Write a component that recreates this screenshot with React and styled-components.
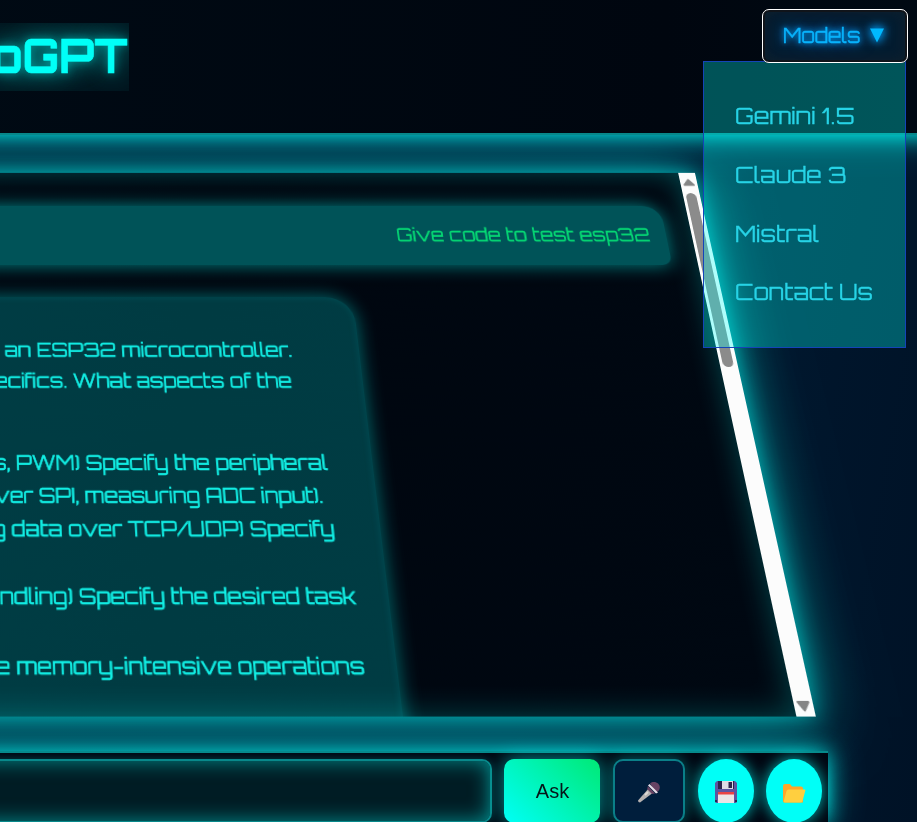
import React, { useLayoutEffect, useRef } from 'react';
import styled, { createGlobalStyle } from 'styled-components';

const techFont = '"Orbitron", "DejaVu Sans", sans-serif';

const GlobalStyle = createGlobalStyle`
  * { box-sizing: border-box; }
  html, body { margin: 0; padding: 0; overflow: hidden; background: #000a14; }
`;

const Page = styled.div`
  width: 917px;
  height: 822px;
  overflow: hidden;
  display: flex;
  flex-direction: column;
  background: linear-gradient(100deg, #00182f 0%, #001a33 60%, #001226 100%);
  font-family: ${techFont};
`;

const Header = styled.header`
  position: relative;
  z-index: 2;
  flex: 0 0 135px;
  display: flex;
  justify-content: space-between;
  align-items: flex-start;
  margin: 0 -60px;
  padding: 9px 69px 0 60px;
  background: linear-gradient(90deg, #000a14, #00060f 70%, #000a14);
  border-bottom: 2px solid #07878a;
  box-shadow: 0 0 20px rgba(0, 255, 247, 0.9), 0 0 40px rgba(0, 220, 235, 0.42);
`;

const Title = styled.h1`
  margin: 14px 0 0;
  width: 129px;
  height: 68px;
  padding-right: 1px;
  overflow: hidden;
  display: flex;
  justify-content: flex-end;
  font-size: 45.5px;
  line-height: 66px;
  font-weight: 700;
  color: #00fff7;
  background: rgba(0, 255, 255, 0.05);
  -webkit-text-stroke: 0.6px #00fff7;
  text-shadow: 0 0 10px rgba(0, 255, 247, 0.42), 0 0 22px rgba(0, 255, 247, 0.5), 0 0 36px rgba(0, 255, 247, 0.4);
`;

const FittedBox = styled.span`
  display: block;
  flex: none;
  width: ${(p) => p.$w}px;
  white-space: nowrap;
`;

const FittedInner = styled.span`
  display: inline-block;
  transform-origin: 0 50%;
`;

/* Scales one line of text horizontally to fill the given width. */
function Fitted({ w, children }) {
  const ref = useRef(null);
  useLayoutEffect(() => {
    const el = ref.current;
    el.style.transform = `scaleX(${w / el.offsetWidth})`;
  }, [w, children]);
  return (
    <FittedBox $w={w}>
      <FittedInner ref={ref}>{children}</FittedInner>
    </FittedBox>
  );
}

const MenuWrap = styled.nav`
  position: relative;
`;

const ModelsButton = styled.button`
  position: relative;
  z-index: 2;
  display: flex;
  align-items: center;
  gap: 8px;
  width: 146px;
  height: 54px;
  padding: 0 0 2px 18px;
  border: 3px solid #10141a;
  border-radius: 7px;
  outline: 1px solid #fff;
  outline-offset: -1px;
  background: #041c30;
  box-shadow: inset 0 0 12px #10202c;
  color: #08b2fb;
  font: 400 20px ${techFont};
  -webkit-text-stroke: 0.3px #08b2fb;
  text-shadow: 0 0 5px #008ee0, 0 0 10px #0085d8, 0 0 16px #0079c8;
`;

const Caret = styled.svg`
  width: 16px;
  height: 15px;
  overflow: visible;
  fill: #00b9ff;
  filter: drop-shadow(0 0 4px #0090e0) drop-shadow(0 0 5px #0080d0);
`;

const Dropdown = styled.div`
  position: absolute;
  z-index: 1;
  top: 52px;
  right: 2px;
  width: 203px;
  height: 287px;
  padding: 24px 0 0 31px;
  border: 1px solid #1444b8;
  background: rgba(0, 255, 250, 0.31);
  background-clip: padding-box;
`;

const MenuItem = styled.a`
  display: flex;
  align-items: center;
  height: 58.7px;
  color: #27d3e6;
  font-size: 22.5px;
  -webkit-text-stroke: 0.3px #27d3e6;
`;

const Main = styled.main`
  flex: 0 0 616px;
  padding-top: 10px;
`;

const ChatPanel = styled.section`
  display: flex;
  width: 1660px;
  height: 560px;
  margin-left: -909px;
  transform: perspective(1000px) rotateX(15deg);
  background: linear-gradient(100deg, #000c18, #00060f 65%, #000812);
  box-shadow: 0 0 20px rgba(0, 255, 247, 0.5), 0 0 54px rgba(0, 255, 247, 0.6);
`;

const Messages = styled.div`
  flex: 1;
  overflow: hidden;
  display: flex;
  flex-direction: column;
  align-items: flex-start;
  padding: 39px 27px 0 0;
  box-shadow: inset 0 0 30px rgba(0, 255, 247, 0.26);
`;

const UserBubble = styled.div`
  flex: none;
  align-self: stretch;
  display: flex;
  justify-content: flex-end;
  align-items: center;
  height: 68px;
  padding: 0 17px 3px 0;
  border-radius: 20px 20px 10px 20px;
  background: #005358;
  box-shadow: 0 0 20px rgba(0, 255, 247, 0.5);
  color: #06db75;
  font-size: 20.8px;
  -webkit-text-stroke: 0.3px #06db75;
`;

const BotBubble = styled.div`
  flex: none;
  width: 1277px;
  height: 640px;
  margin-top: 36px;
  padding-top: 40.5px;
  border-radius: 28px;
  background: rgba(0, 245, 245, 0.225);
  box-shadow: 0 0 20px rgba(0, 255, 247, 0.42), inset 0 0 8px rgba(0, 255, 247, 0.1);
  color: #12efe5;
  font-size: 20.8px;
  line-height: 33px;
  -webkit-text-stroke: 0.5px #12efe5;
`;

const Line = styled.div`
  height: 33px;
  margin-top: ${(p) => p.$gap || 0}px;
  padding-left: ${(p) => p.$left}px;
`;

const ScrollTrack = styled.div`
  flex: 0 0 18px;
  display: flex;
  flex-direction: column;
  align-items: center;
  padding: 5px 1px 3px 0;
  background: #fcfcfc;
`;

const ScrollThumb = styled.div`
  width: 11px;
  height: 195px;
  margin: 7px 0 auto;
  border-radius: 6px;
  background: #8b8b8b;
`;

const Arrow = styled.svg`
  width: 14px;
  height: 12px;
  fill: #858585;
  stroke: #858585;
  stroke-width: 2;
  stroke-linejoin: round;
`;

const Footer = styled.footer`
  position: relative;
  z-index: 1;
  flex: 0 0 73px;
  width: 888px;
  display: flex;
  align-items: flex-start;
  margin-left: -60px;
  padding: 6px 6px 0 20px;
  border-top: 2px solid #07898b;
  background: #000611;
  box-shadow: 0 0 20px rgba(0, 255, 247, 0.8), 0 0 40px rgba(0, 235, 240, 0.4);
`;

const PromptInput = styled.input`
  width: 532px;
  height: 64px;
  margin: 0 12px 0 0;
  border: 2px solid #08898b;
  border-radius: 10px;
  outline: none;
  background: #001c24;
  box-shadow: inset 0 0 20px rgba(0, 255, 247, 0.5), 0 0 10px rgba(0, 255, 247, 0.25);
`;

const AskButton = styled.button`
  width: 96px;
  height: 64px;
  margin-right: 13px;
  padding: 0 0 0 1px;
  border: 0;
  border-radius: 10px;
  background: linear-gradient(45deg, #00fff7, #00e975);
  box-shadow: 0 0 20px rgba(0, 255, 247, 0.6);
  color: #061719;
  font: 400 20px "Liberation Sans", Arial, sans-serif;
`;

const MicButton = styled.button`
  display: flex;
  align-items: center;
  justify-content: center;
  width: 72px;
  height: 64px;
  margin-right: 13px;
  padding: 2px 0 0;
  border: 2px solid #0a7f88;
  border-radius: 10px;
  background: #001e3c;
  box-shadow: 0 0 16px rgba(0, 255, 247, 0.4);
`;

const RoundButton = styled.button`
  display: flex;
  align-items: center;
  justify-content: center;
  width: 56px;
  height: 64px;
  margin-right: ${(p) => p.$gap || 0}px;
  padding: 2px 1px 0 0;
  border: 0;
  border-radius: 50%;
  background: #00fff7;
  box-shadow: 0 0 15px rgba(0, 255, 247, 0.75);
`;

const Glyph = styled.svg`
  width: 24px;
  height: 24px;
  display: block;
`;

const models = [
  ['Gemini 1.5', 119],
  ['Claude 3', 111],
  ['Mistral', 84],
  ['Contact Us', 138.5],
];

const lines = [
  { text: 'an ESP32 microcontroller.', left: 914.5, w: 294 },
  { text: 'ecifics. What aspects of the', left: 903.5, w: 301 },
  { text: 's, PWM) Specify the peripheral', left: 900.5, w: 331.5, gap: 52 },
  { text: 'ver SPI, measuring ADC input).', left: 902, w: 323 },
  { text: 'g data over TCP/UDP) Specify', left: 899, w: 333 },
  { text: 'ndling) Specify the desired task', left: 905, w: 340.5, gap: 32.5 },
  { text: 'e memory-intensive operations', left: 900, w: 347, gap: 32 },
];

function MicIcon() {
  return (
    <Glyph viewBox="0 0 24 24">
      <path d="M1 20.5 12 8l4.3 4.5L3 22.5Q1 22.5 1 20.5Z" fill="#b5b1b0" />
      <path d="m8 15 3-3" stroke="#dedad6" strokeWidth="1.8" />
      <path d="M13 3.5C17 0 23 3 22.8 7.5c0 2.5-1.8 4.5-4 5Z" fill="#674263" />
      <path d="m12.5 4 8.500 8.500-2 1-8-8Z" fill="#e5dce6" />
      <path d="m10.800 6 7.200 7.500-3 .5-4.700-4.700Z" fill="#674263" />
    </Glyph>
  );
}

function DiskIcon() {
  return (
    <Glyph viewBox="0 0 24 24">
      <path d="M3 1h18l2 2v19l-1 1H2l-1-1V3Z" fill="#5c55a0" />
      <path d="M4 1h16v8H4Z" fill="#2e244b" />
      <path d="M8 1h11v8H8Z" fill="#dedbe4" />
      <path d="M14.500 2H18v6h-3.500Z" fill="#2e244b" />
      <path d="M4 12h16v11H4Z" fill="#ebe5e6" />
      <path d="M4 12h16v2.500H4Z" fill="#e94343" />
      <path d="M1 20h2v2H1Zm20 0h2v2h-2Z" fill="#29244b" />
    </Glyph>
  );
}

function FolderIcon() {
  return (
    <Glyph viewBox="0 0 24 24">
      <path d="M1 6q0-2 2-2h5l2 2.500h9q2 0 2 2v14H2q-1 0-1-2Z" fill="#ffa629" />
      <path d="M6.500 9.500H22.500q1.200 0 .8 1.300L20.500 21q-.4 1.500-2 1.500H2.500Q1.500 22 1.800 21L4.500 11Q5 9.500 6.500 9.500Z" fill="#ffcf3f" />
    </Glyph>
  );
}

export default function App() {
  return (
    <>
      <GlobalStyle />
      <Page>
        <Header>
          <Title><Fitted w={136}>oGPT</Fitted></Title>
          <MenuWrap>
            <ModelsButton>
              <Fitted w={78}>Models</Fitted>
              <Caret viewBox="0 0 16 15"><path d="M1 0.500H15L8 14.500Z" /></Caret>
            </ModelsButton>
            <Dropdown>
              {models.map(([name, w]) => (
                <MenuItem key={name}><Fitted w={w}>{name}</Fitted></MenuItem>
              ))}
            </Dropdown>
          </MenuWrap>
        </Header>
        <Main>
          <ChatPanel>
            <Messages>
              <UserBubble><Fitted w={267}>Give code to test esp32</Fitted></UserBubble>
              <BotBubble>
                {lines.map((l) => (
                  <Line key={l.text} $left={l.left} $gap={l.gap}>
                    <Fitted w={l.w}>{l.text}</Fitted>
                  </Line>
                ))}
              </BotBubble>
            </Messages>
            <ScrollTrack>
              <Arrow viewBox="0 0 14 12"><path d="M7 3.500 12 9.500H2Z" /></Arrow>
              <ScrollThumb />
              <Arrow viewBox="0 0 14 12"><path d="M7 9.500 12 2H2Z" /></Arrow>
            </ScrollTrack>
          </ChatPanel>
        </Main>
        <Footer>
          <PromptInput />
          <AskButton>Ask</AskButton>
          <MicButton><MicIcon /></MicButton>
          <RoundButton $gap={12}><DiskIcon /></RoundButton>
          <RoundButton><FolderIcon /></RoundButton>
        </Footer>
      </Page>
    </>
  );
}
